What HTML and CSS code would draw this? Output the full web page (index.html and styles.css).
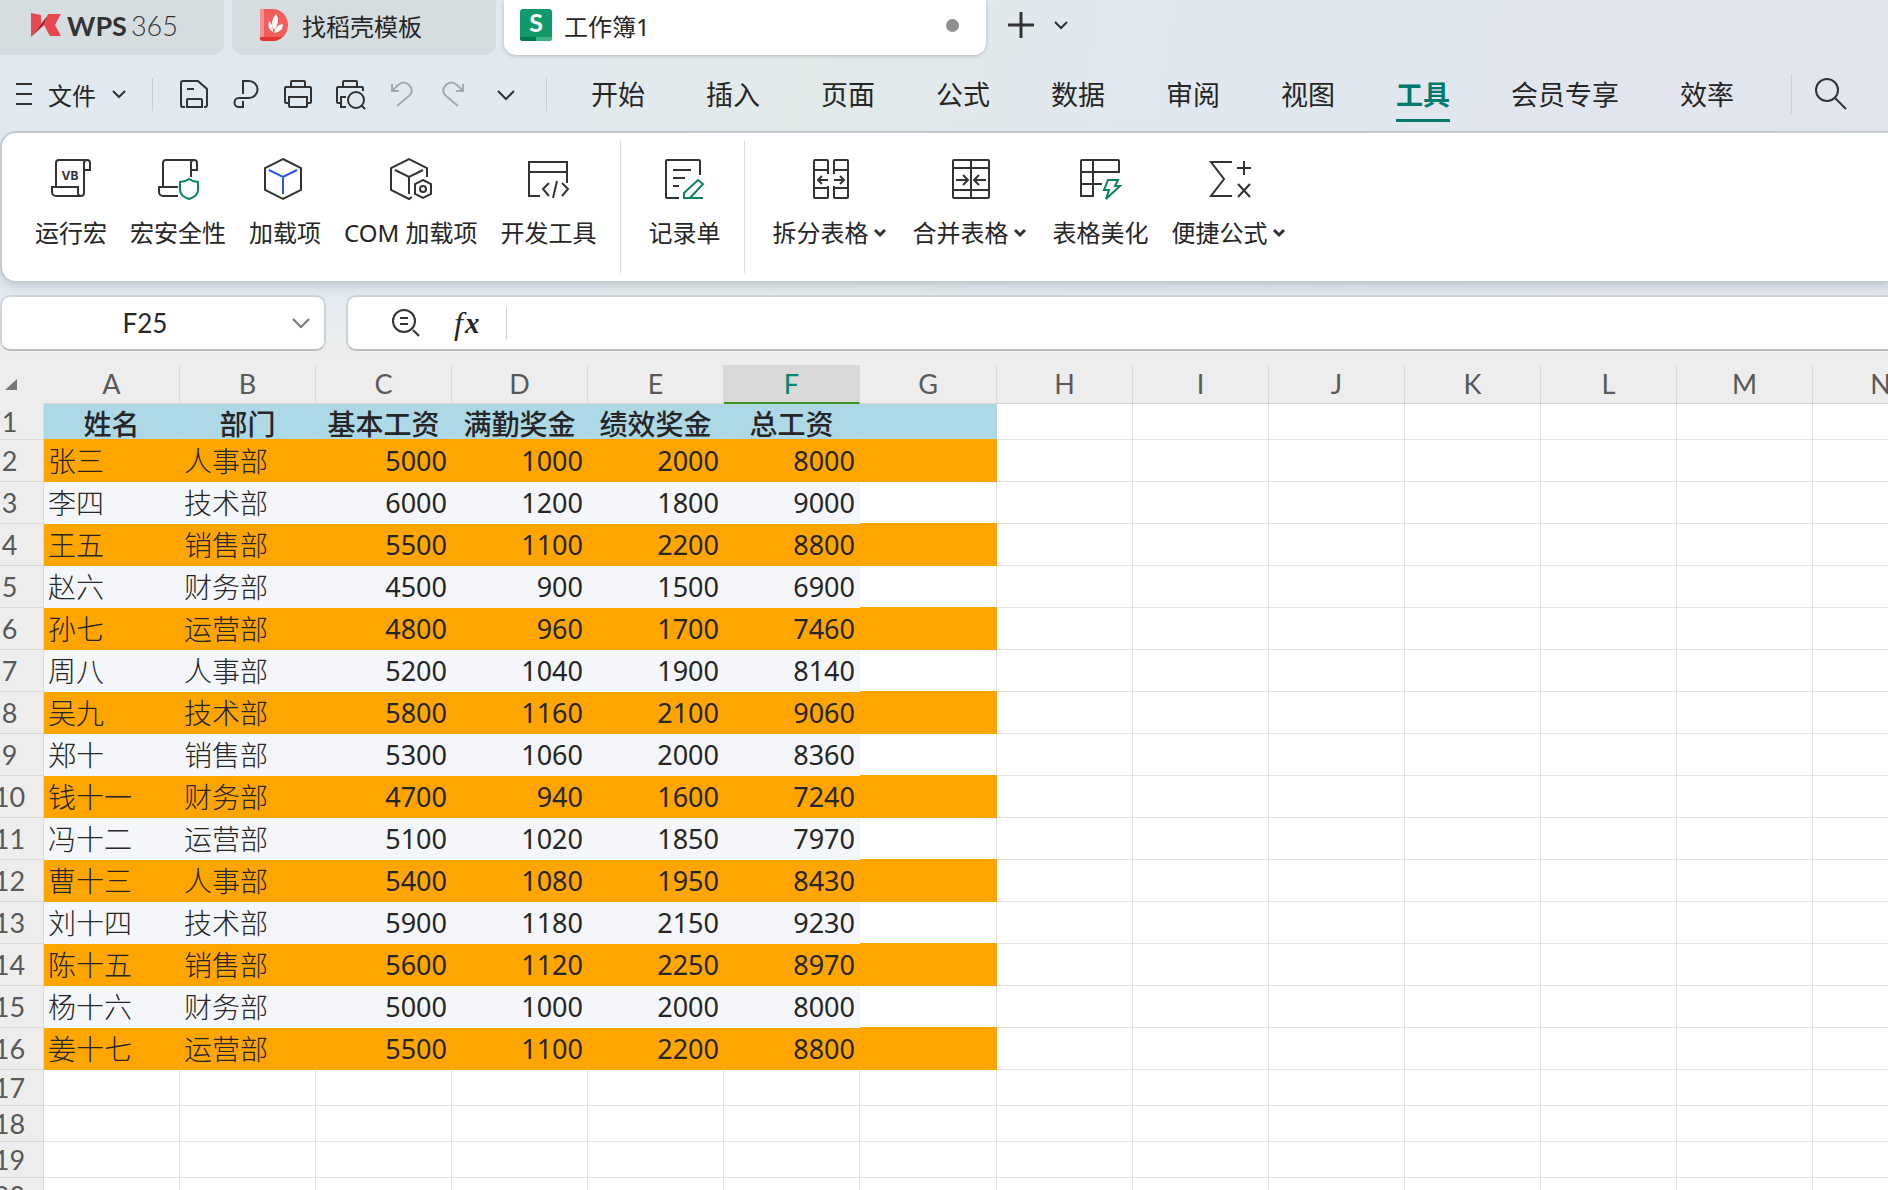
FILE: index.html
```html
<!DOCTYPE html>
<html lang="zh-CN">
<head>
    <meta charset="utf-8" />
    <title>工作簿1</title>
    <link rel="stylesheet" href="styles.css">
</head>
<body>
    <header class="chrome">
        <nav class="doctabs">
            <a href="#" class="doctab doctab-home">
                <svg width="30" height="24" viewBox="0 0 30 24"><path d="M0 0l10 2v9L0 24z" fill="#e8474f"/><path d="M0 24L17 2l-4 10z" fill="#a81e32"/><path d="M17 1h13l-6 11 6 11H19l-6-11z" fill="#e8474f"/></svg>
                <span class="brand"><b>WPS</b>365</span>
            </a>
            <a href="#" class="doctab doctab-docer">
                <svg width="28" height="32" viewBox="0 0 28 32"><path d="M3 0h10a15 16 0 0 1 0 32H3a3 3 0 0 1-3-3V3a3 3 0 0 1 3-3z" fill="#f45c5c"/><path d="M3 0h1v28H0V3a3 3 0 0 1 3-3z" fill="#f79090"/><path d="M0 28h22q-4 4-9 4H3a3 3 0 0 1-3-3z" fill="#e23333"/><path d="M16 5q5 7-2 16-5-8 2-16zM9 12q4 3 4 11-6-3-4-11zM23 15q0 8-9 9 1-8 9-9z" fill="#fff"/></svg>
                <span>找稻壳模板</span>
            </a>
            <a href="#" class="doctab doctab-active">
                <svg width="32" height="32" viewBox="0 0 32 32"><rect width="32" height="32" rx="3" fill="#12996a"/><path d="M0 28h16v4H3a3 3 0 0 1-3-3z" fill="#007a4f"/><path d="M16 28h16v1a3 3 0 0 1-3 3H16z" fill="#3cb383"/><text x="16" y="23" class="logo-s">S</text></svg>
                <span>工作簿1</span>
                <i class="dot"></i>
            </a>
            <button class="icon-btn newtab" aria-label="新建">
                <svg width="28" height="28" viewBox="0 0 28 28" class="thick"><path d="M1 14h26M14 1v26"/></svg>
            </button>
            <button class="icon-btn newtab-more" aria-label="更多">
                <svg width="14" height="10" viewBox="0 0 14 10"><path d="M1 2l6 6 6-6"/></svg>
            </button>
        </nav>

        <div class="menubar">
            <button class="icon-btn file-btn">
                <svg width="16" height="22" viewBox="0 0 16 22"><path d="M0 1h16M0 11h16M0 21h16"/></svg>
                <span>文件</span>
                <svg width="14" height="10" viewBox="0 0 14 10"><path d="M1 2l6 6 6-6"/></svg>
            </button>
            <i class="sep"></i>
            <div class="quick">
                <button class="icon-btn" aria-label="保存"><svg width="28" height="28" viewBox="0 0 28 28"><path d="M5 27H3a2 2 0 0 1-2-2V3a2 2 0 0 1 2-2h15l9 8v16a2 2 0 0 1-2 2h-1M7 27v-7a1 1 0 0 1 1-1h13a1 1 0 0 1 1 1v7zM7 9h7"/></svg></button>
                <button class="icon-btn" aria-label="输出为PDF"><svg width="28" height="28" viewBox="0 0 28 28"><path d="M11 14V1h6a8 8 0 0 1 0 17H7a4.500 4.500 0 0 0 0 9h4v-6"/></svg></button>
                <button class="icon-btn" aria-label="打印"><svg width="28" height="28" viewBox="0 0 28 28"><path d="M7 7V2a1 1 0 0 1 1-1h12a1 1 0 0 1 1 1v5M4 23H2a1 1 0 0 1-1-1V8a1 1 0 0 1 1-1h24a1 1 0 0 1 1 1v14a1 1 0 0 1-1 1h-2M5 17h18v9a1 1 0 0 1-1 1H6a1 1 0 0 1-1-1z"/></svg></button>
                <button class="icon-btn" aria-label="打印预览"><svg width="30" height="28" viewBox="0 0 30 28"><path d="M7 7V2a1 1 0 0 1 1-1h12a1 1 0 0 1 1 1v5M4 23H2a1 1 0 0 1-1-1V8a1 1 0 0 1 1-1h24a1 1 0 0 1 1 1v3M10 17H5v10h5M25 25l4 4"/><circle cx="20" cy="20" r="8"/></svg></button>
                <button class="icon-btn faded" aria-label="撤销"><svg width="28" height="28" viewBox="0 0 28 28"><path d="M4 4v7h7M4 11l6-6q6-5 11 0t1 10L9 26"/></svg></button>
                <button class="icon-btn faded" aria-label="恢复"><svg width="28" height="28" viewBox="0 0 28 28"><path d="M23 4v7h-7M23 11l-6-6q-6-5-11 0t-1 10l13 11"/></svg></button>
                <button class="icon-btn" aria-label="自定义"><svg width="28" height="28" viewBox="0 0 28 28"><path d="M6 11l8 8 8-8"/></svg></button>
            </div>
            <i class="sep"></i>
            <nav class="menus">
                <a href="#">开始</a>
                <a href="#">插入</a>
                <a href="#">页面</a>
                <a href="#">公式</a>
                <a href="#">数据</a>
                <a href="#">审阅</a>
                <a href="#">视图</a>
                <a href="#" class="current">工具</a>
                <a href="#">会员专享</a>
                <a href="#">效率</a>
            </nav>
            <i class="sep sep-search"></i>
            <button class="icon-btn" aria-label="搜索">
                <svg width="32" height="32" viewBox="0 0 32 32"><circle cx="12" cy="12" r="11"/><path d="M20 20l11 11"/></svg>
            </button>
        </div>

        <div class="ribbon">
            <div class="group">
                <button class="tool">
                    <svg width="42" height="42" viewBox="0 0 42 42"><path d="M6 29V5a3 3 0 0 1 3-3h28a3 3 0 0 1 3 3v7h-6V5a3 3 0 0 1 3-3M34 12v23a3 3 0 0 1-3 3H6a4 4 0 0 1-4-4v-5h26v6a3 3 0 0 0 3 3"/><text x="20" y="22" class="vb">VB</text></svg>
                    <span>运行宏</span>
                </button>
                <button class="tool">
                    <svg width="42" height="42" viewBox="0 0 42 42"><path d="M6 29V5a3 3 0 0 1 3-3h28a3 3 0 0 1 3 3v7h-6V5a3 3 0 0 1 3-3M34 12v7M21 38H6a4 4 0 0 1-4-4v-5h19"/><path class="green" d="M32 21q4 3 9 3v8q0 6-9 9-9-3-9-9v-8q5 0 9-3z"/></svg>
                    <span>宏安全性</span>
                </button>
                <button class="tool">
                    <svg width="42" height="42" viewBox="0 0 42 42"><path d="M19 1l18 9v22l-18 9-18-9V10z"/><path class="blue" d="M5 12l14 7 14-7M19 20v16"/></svg>
                    <span>加载项</span>
                </button>
                <button class="tool">
                    <svg width="42" height="42" viewBox="0 0 42 42"><path d="M37 19v-9L19 1 1 10v22l18 9 3-2M5 12l14 7 14-7M19 19v17M33 22l8 4v10l-8 4-8-4V26z"/><circle cx="33" cy="31" r="3"/></svg>
                    <span>COM 加载项</span>
                </button>
                <button class="tool">
                    <svg width="42" height="42" viewBox="0 0 42 42"><path d="M13 38H2V4h38v21M2 14h38M22 25l-6 6 6 7M35 25l6 6-6 7M30 23l-4 17"/></svg>
                    <span>开发工具</span>
                </button>
            </div>
            <div class="group">
                <button class="tool">
                    <svg width="42" height="42" viewBox="0 0 42 42"><path d="M16 40H4a1 1 0 0 1-1-1V3a1 1 0 0 1 1-1h32a1 1 0 0 1 1 1v14M10 12h18M10 20h12M10 28h6"/><path class="green" d="M21 40v-5l14-13 5 4-13 14zM20 40h20"/></svg>
                    <span>记录单</span>
                </button>
            </div>
            <div class="group">
                <button class="tool">
                    <svg width="42" height="42" viewBox="0 0 42 42"><path d="M18 16V3a1 1 0 0 0-1-1H5a1 1 0 0 0-1 1v36a1 1 0 0 0 1 1h12a1 1 0 0 0 1-1V28M24 16V3a1 1 0 0 1 1-1h12a1 1 0 0 1 1 1v36a1 1 0 0 1-1 1H25a1 1 0 0 1-1-1V28M4 12h14M24 12h14M4 30h14M24 30h14M18 22H8M12 18l-4 4 4 4M24 22h10M30 18l4 4-4 4"/></svg>
                    <span>拆分表格<svg width="12" height="8" viewBox="0 0 12 8" class="caret"><path d="M1 1l5 5 5-5"/></svg></span>
                </button>
                <button class="tool">
                    <svg width="42" height="42" viewBox="0 0 42 42"><rect x="3" y="2" width="36" height="38" rx="1"/><path d="M3 10h36M3 32h36M21 2v38M6 22h11M13 17l5 5-5 5M36 22H25M29 17l-5 5 5 5"/></svg>
                    <span>合并表格<svg width="12" height="8" viewBox="0 0 12 8" class="caret"><path d="M1 1l5 5 5-5"/></svg></span>
                </button>
                <button class="tool">
                    <svg width="42" height="42" viewBox="0 0 42 42"><path d="M2 3a1 1 0 0 1 1-1h36a1 1 0 0 1 1 1v11H2zM2 14v24h12V2M2 26h21"/><path class="green" d="M29 22h10l-3 6h5L27 41l3-9h-5z"/></svg>
                    <span>表格美化</span>
                </button>
                <button class="tool">
                    <svg width="42" height="42" viewBox="0 0 42 42"><path d="M23 4H2l13 17L2 38h21M28 10h14M35 3v14M29 26l12 13M41 26L29 39"/></svg>
                    <span>便捷公式<svg width="12" height="8" viewBox="0 0 12 8" class="caret"><path d="M1 1l5 5 5-5"/></svg></span>
                </button>
            </div>
        </div>

        <div class="formula-row">
            <div class="box name-box">
                <input type="text" value="F25" aria-label="名称框">
                <button class="icon-btn faded-dark" aria-label="展开名称"><svg width="18" height="12" viewBox="0 0 18 12"><path d="M1 2l8 8 8-8"/></svg></button>
            </div>
            <div class="box formula-box">
                <button class="icon-btn" aria-label="查找"><svg width="28" height="28" viewBox="0 0 28 28"><circle cx="12" cy="12" r="11"/><path d="M8 9h8M8 15h8M21 21l6 6"/></svg></button>
                <button class="icon-btn fx" aria-label="插入函数">f<b>x</b></button>
                <i class="sep sep-fx"></i>
                <input type="text" aria-label="编辑栏">
            </div>
        </div>
    </header>

    <main class="sheet">
        <table class="grid">
            <thead id="gridhead"></thead>
            <tbody id="gridbody"></tbody>
        </table>
    </main>
    <script src="script.js"></script>
</body>
</html>
```

FILE: styles.css
```css
* {
    box-sizing: border-box;
}

body {
    margin: 0;
    height: 100vh;
    overflow: hidden;
    background: #fff;
    color: #262626;
    font-family: "Noto Sans", "Noto Sans CJK SC", sans-serif;
    font-size: 24px;
}

a {
    color: inherit;
    text-decoration: none;
}

button, input {
    border: 0;
    padding: 0;
    background: none;
    color: inherit;
    font: inherit;
}

svg {
    display: block;
    flex: none;
    overflow: visible;
    fill: none;
    stroke: none;
}

button svg {
    stroke: #333;
    stroke-width: 2;
}

.chrome {
    padding-bottom: 14px;
    background: linear-gradient(to bottom, transparent 80%, #ededed 97%), linear-gradient(100deg, #e2eaf1 0%, #e2eaf1 25%, #e2eaea 42%, #e1e8ef 60%, #e2e5ee 100%);
}

.icon-btn {
    display: flex;
    align-items: center;
}

/* document tabs */
.doctabs {
    display: flex;
    align-items: center;
    height: 55px;
    padding-bottom: 5px;
}

.doctab {
    display: flex;
    align-items: center;
    height: 55px;
    margin: 5px 8px 0 0;
    padding-bottom: 5px;
    border-radius: 0 0 12px 12px;
    background: #d6dde0;
}

.doctab-home {
    width: 224px;
    padding-left: 31px;
    border-bottom-left-radius: 0;
    gap: 6px;
}

.brand {
    font-family: Lato, sans-serif;
    font-size: 27px;
    font-weight: 300;
    color: #333;
}

.brand b {
    font-weight: 700;
    margin-right: 4px;
}

.doctab-docer {
    width: 264px;
    padding-left: 28px;
    gap: 14px;
}

.doctab-active {
    width: 482px;
    padding: 0 27px 5px 16px;
    gap: 12px;
    background: #fff;
    box-shadow: 0 1px 4px rgba(0,0,0,0.2);
}

.logo-s {
    fill: #fff;
    font-family: Lato, sans-serif;
    font-size: 25px;
    font-weight: 700;
    text-anchor: middle;
}

.dot {
    width: 13px;
    height: 13px;
    margin-left: auto;
    border-radius: 50%;
    background: #8f8f8f;
}

.newtab {
    margin-left: 13px;
}

.newtab-more {
    margin-left: 19px;
}

.thick {
    stroke-width: 3;
}

/* menu row */
.menubar {
    display: flex;
    align-items: center;
    height: 78px;
    padding-left: 16px;
}

.file-btn {
    gap: 16px;
}

.sep {
    flex: none;
    width: 1px;
    height: 33px;
    margin: 0 27px 0 26px;
    background: #c8ced2;
}

.sep-search {
    height: 40px;
    margin: 0 23px 0 57px;
}

.quick {
    display: flex;
    gap: 24px;
}

.quick .icon-btn {
    width: 28px;
}

.faded svg {
    stroke: #a6a9ac;
}

.menus {
    display: flex;
    gap: 61px;
    margin-left: 17px;
    font-size: 27px;
    line-height: 40px;
    white-space: nowrap;
}

.menus a {
    padding: 8px 0 4px;
    border-bottom: 3px solid transparent;
}

.menus .current {
    color: #007a6c;
    font-weight: 700;
    border-color: #007a6c;
}

/* ribbon */
.ribbon {
    display: flex;
    height: 148px;
    margin-left: 2px;
    padding: 8px 0;
    border-radius: 14px 0 0 14px;
    background: #fff;
    box-shadow: 0 0 0 2px #c3cccf, 0 4px 10px rgba(90,110,120,0.3);
}

.group {
    display: flex;
    gap: 23px;
    padding: 17px 24px 0 27px;
    border-right: 1px solid #dcdcdc;
}

.group:first-child {
    padding-left: 33px;
}

.group:last-child {
    border-right: 0;
}

.tool {
    display: flex;
    flex-direction: column;
    align-items: center;
    gap: 17px;
    height: 92px;
    line-height: 32px;
    white-space: nowrap;
}

.tool span {
    display: flex;
    align-items: center;
    gap: 6px;
}

.tool .green {
    stroke: #0b8457;
}

.tool .blue {
    stroke: #2457e6;
}

.caret {
    margin-right: 3px;
    stroke-width: 3;
}

.vb {
    fill: #333;
    stroke: none;
    font-family: Inter, sans-serif;
    font-size: 12px;
    font-weight: 700;
    text-anchor: middle;
}

/* name box and formula box */
.formula-row {
    display: flex;
    gap: 20px;
    margin-top: 14px;
}

.box {
    display: flex;
    align-items: center;
    height: 56px;
    border: 2px solid #cdd4d8;
    border-bottom-color: #b8bbbd;
    border-radius: 10px;
    background: #fff;
}

.name-box {
    width: 326px;
    padding-right: 14px;
}

.name-box input {
    flex: 1;
    min-width: 0;
    padding-right: 4px;
    font-family: Lato, sans-serif;
    font-size: 26px;
    text-align: center;
}

.faded-dark svg {
    stroke: #777;
}

.formula-box {
    flex: 1;
    padding-left: 44px;
    border-right: 0;
    border-radius: 10px 0 0 10px;
}

.fx {
    width: 28px;
    margin-left: 34px;
    font-family: "Liberation Serif", serif;
    font-size: 32px;
    font-style: italic;
    line-height: 32px;
}

.fx b {
    margin-left: 2px;
    font-size: 29px;
}

.sep-fx {
    height: 32px;
    margin: 0 12px 0 24px;
}

.formula-box input {
    flex: 1;
}

/* the first column of the sheet runs off the left side of the window */
.sheet {
    overflow: hidden;
}

.grid {
    width: 1973px;
    margin-left: -24px;
    border-spacing: 0;
    table-layout: fixed;
    line-height: 28px;
}

.grid th, .grid td {
    height: 36px;
    padding: 0 4px;
    border-right: 1px solid #e3e3e3;
    border-bottom: 1px solid #e3e3e3;
    white-space: nowrap;
}

.grid th {
    width: 136px;
    background: #ededed;
    border-color: #d8d8d8;
    color: #595959;
    font-family: Lato, sans-serif;
    font-size: 27px;
    font-weight: 400;
}

.grid thead th {
    height: 39px;
}

.grid th.rowhead {
    width: 68px;
}

.grid th.wide {
    width: 137px;
}

.grid thead .rowhead {
    border-color: #ededed;
}

.grid thead .rowhead svg {
    margin-left: 25px;
    fill: #777;
}

.grid th.selected {
    background: #d9d9d9;
    border-right-color: #d9d9d9;
    border-bottom: 2px solid #3f9420;
    color: #008573;
}

.grid .record > * {
    height: 42px;
}

.grid td.title {
    padding: 4px 0 0;
    background: #add8e6;
    border-right-color: #add8e6;
    border-bottom-color: #ffa500;
    font-size: 28px;
    font-weight: 500;
    text-align: center;
}

.grid td.text {
    font-size: 28px;
    font-weight: 300;
}

.grid td.num {
    font-size: 27px;
    text-align: right;
}

.grid td.plain {
    background: #f4f6f9;
    border-color: #f4f6f9;
}

.grid td.orange {
    background: #ffa500;
    border-color: #ffa500;
}

.grid td.lastcol {
    border-bottom-color: #ffa500;
}
```

FILE: script.js
```javascript
var columns = "ABCDEFGHIJKLMN".split("");
var titles = ["姓名", "部门", "基本工资", "满勤奖金", "绩效奖金", "总工资", ""];
var lst = [
    ["张三", "人事部", 5000, 1000, 2000, 8000],
    ["李四", "技术部", 6000, 1200, 1800, 9000],
    ["王五", "销售部", 5500, 1100, 2200, 8800],
    ["赵六", "财务部", 4500, 900, 1500, 6900],
    ["孙七", "运营部", 4800, 960, 1700, 7460],
    ["周八", "人事部", 5200, 1040, 1900, 8140],
    ["吴九", "技术部", 5800, 1160, 2100, 9060],
    ["郑十", "销售部", 5300, 1060, 2000, 8360],
    ["钱十一", "财务部", 4700, 940, 1600, 7240],
    ["冯十二", "运营部", 5100, 1020, 1850, 7970],
    ["曹十三", "人事部", 5400, 1080, 1950, 8430],
    ["刘十四", "技术部", 5900, 1180, 2150, 9230],
    ["陈十五", "销售部", 5600, 1120, 2250, 8970],
    ["杨十六", "财务部", 5000, 1000, 2000, 8000],
    ["姜十七", "运营部", 5500, 1100, 2200, 8800]
];
var headClass = { F: "selected", G: "wide" };

function cell(row, col) {
    if (row === 1) {
        return col < 7 ? `<td class="title">${titles[col]}</td>` : "<td></td>";
    }
    var record = lst[row - 2];
    if (!record || col > 6) {
        return "<td></td>";
    }
    var fill = row % 2 === 0 ? "orange" : "plain";
    if (col === 6) {
        return `<td class="lastcol ${fill === "orange" ? fill : ""}"></td>`;
    }
    return `<td class="${col < 2 ? "text" : "num"} ${fill}">${record[col]}</td>`;
}

function display() {
    var head = '<tr><th class="rowhead"><svg width="12" height="11" viewBox="0 0 12 11"><path d="M12 0v11H0z"/></svg></th>';
    for (var c = 0; c < columns.length; c++) {
        head += `<th class="${headClass[columns[c]] || ""}">${columns[c]}</th>`;
    }
    document.getElementById("gridhead").innerHTML = head + "</tr>";

    var body = "";
    for (var r = 1; r <= 20; r++) {
        body += `<tr class="${lst[r - 2] ? "record" : ""}"><th class="rowhead">${r}</th>`;
        for (var i = 0; i < columns.length; i++) {
            body += cell(r, i);
        }
        body += "</tr>";
    }
    document.getElementById("gridbody").innerHTML = body;
}

display();
```
